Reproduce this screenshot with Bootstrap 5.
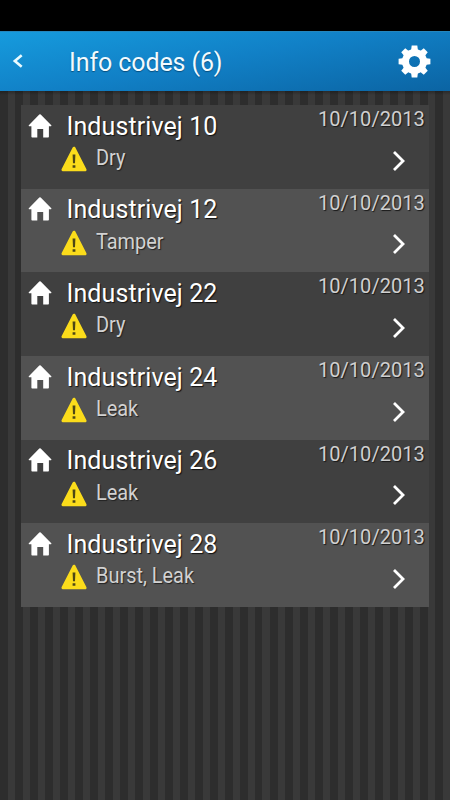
<!DOCTYPE html>
<html lang="en">
<head>
<meta charset="utf-8">
<meta name="viewport" content="width=device-width, initial-scale=1">
<title>Info codes</title>
<link href="https://cdn.jsdelivr.net/npm/bootstrap@5.3.0/dist/css/bootstrap.min.css" rel="stylesheet">
<style>
body{font-family:Roboto,"Noto Sans",sans-serif;background:#303030;height:800px;overflow:hidden}
.status-strip{height:31px;background:#000}
.title-bar{height:60px;background:linear-gradient(170deg,#169bdd 0%,#1180c6 48%,#0b64a3 100%);padding:0 19px 0 12px;border-top:1px solid #2486bd}
.title-bar h1{font-size:25px;line-height:30px;color:#f2fbff;margin:2px 0 0 45px;letter-spacing:-.1px;text-shadow:0 1px 1px #075080}
.striped{height:709px;padding:14px 21px 0 21px;background:linear-gradient(#0004,#0000 4px),repeating-linear-gradient(90deg,#2d2d2d 0 7.5px,#393939 7.5px 15px)}
.code-row{height:83.7px;background:#404040;color:#fff;padding:0 4px 0 7px}
.code-row:nth-child(even){background:#525252}
.house{margin-top:8.5px}
.place{font-size:25px;line-height:30px;margin:6.5px 0 0 -1.5px;letter-spacing:.1px;text-shadow:1px 1px 1px #111;white-space:nowrap}
.warn{margin:4.5px 0 0 -7px}
.state{font-size:22px;line-height:26px;margin:3.5px 0 0 9px;color:#d2d2d2;text-shadow:1px 1px 1px #222;transform:scaleX(.905);transform-origin:left;white-space:nowrap}
.stamp{font-size:21px;line-height:25px;margin-top:2px;color:#d0d0d0;text-shadow:1px 1px 1px #181818;transform:scaleX(.955);transform-origin:right}
.go{margin:17.5px 19.5px 0 0}
</style>
<script src="https://cdn.jsdelivr.net/npm/bootstrap@5.3.0/dist/js/bootstrap.bundle.min.js"></script>
</head>
<body>
<svg class="d-none" aria-hidden="true">
<symbol id="house" viewBox="0 0 24 24"><path fill="#fff" d="M12.7 .6Q12 0 11.3 .6L.8 11.3Q.3 12.2 1.2 12.2H3.4V22.8Q3.4 23.5 4.2 23.5H9.3V15H15.2V23.5H20.1Q20.9 23.5 20.9 22.8V12.2H22.9Q23.8 12.2 23.3 11.3Z"/></symbol>
<symbol id="warn" viewBox="0 0 26 26"><path fill="#fbdc1b" stroke="#fbdc1b" stroke-width="3" stroke-linejoin="round" d="M13 2.2 24 23.8H2Z"/><path fill="#4d4715" d="M11.6 8.5h2.8l-.4 8.8h-2zM11.6 19.2h2.8v2.6h-2.8z"/></symbol>
<symbol id="go" viewBox="0 0 14 22"><path d="M2 2 11 11 2 20" fill="none" stroke="#fff" stroke-width="2.8"/></symbol>
</svg>
<div class="status-strip"></div>
<header class="title-bar d-flex align-items-center">
<svg width="12" height="16" viewBox="0 0 12 16"><path d="M9.7 1.2 2.8 7 9.7 12.8" fill="none" stroke="#e9fbff" stroke-width="2.6"/></svg>
<h1 class="fw-normal flex-grow-1">Info codes (6)</h1>
<svg width="33" height="33" viewBox="-16.5 -16.5 33 33"><defs><path id="tooth" d="M-3.6-10 -2.8-15.9H2.8L3.6-10Z"/></defs>
<g fill="#fff"><use href="#tooth"/><use href="#tooth" transform="rotate(45)"/><use href="#tooth" transform="rotate(90)"/><use href="#tooth" transform="rotate(135)"/><use href="#tooth" transform="rotate(180)"/><use href="#tooth" transform="rotate(225)"/><use href="#tooth" transform="rotate(270)"/><use href="#tooth" transform="rotate(315)"/></g>
<circle r="9" fill="none" stroke="#fff" stroke-width="7"/></svg>
</header>
<main class="striped"><div id="codes"></div></main>
<script>
const rows=[[10,"Dry"],[12,"Tamper"],[22,"Dry"],[24,"Leak"],[26,"Leak"],[28,"Burst, Leak"]];
document.getElementById("codes").innerHTML=rows.map(([n,s])=>`
<div class="code-row d-flex">
<svg class="house flex-shrink-0" width="24" height="24"><use href="#house"/></svg>
<div class="flex-grow-1 ps-3">
<div class="place">Industrivej ${n}</div>
<div class="d-flex"><svg class="warn flex-shrink-0" width="26" height="26"><use href="#warn"/></svg><div class="state">${s}</div></div>
</div>
<div class="d-flex flex-column align-items-end"><div class="stamp">10/10/2013</div><svg class="go" width="14" height="22"><use href="#go"/></svg></div>
</div>`).join("");
</script>
</body>
</html>
